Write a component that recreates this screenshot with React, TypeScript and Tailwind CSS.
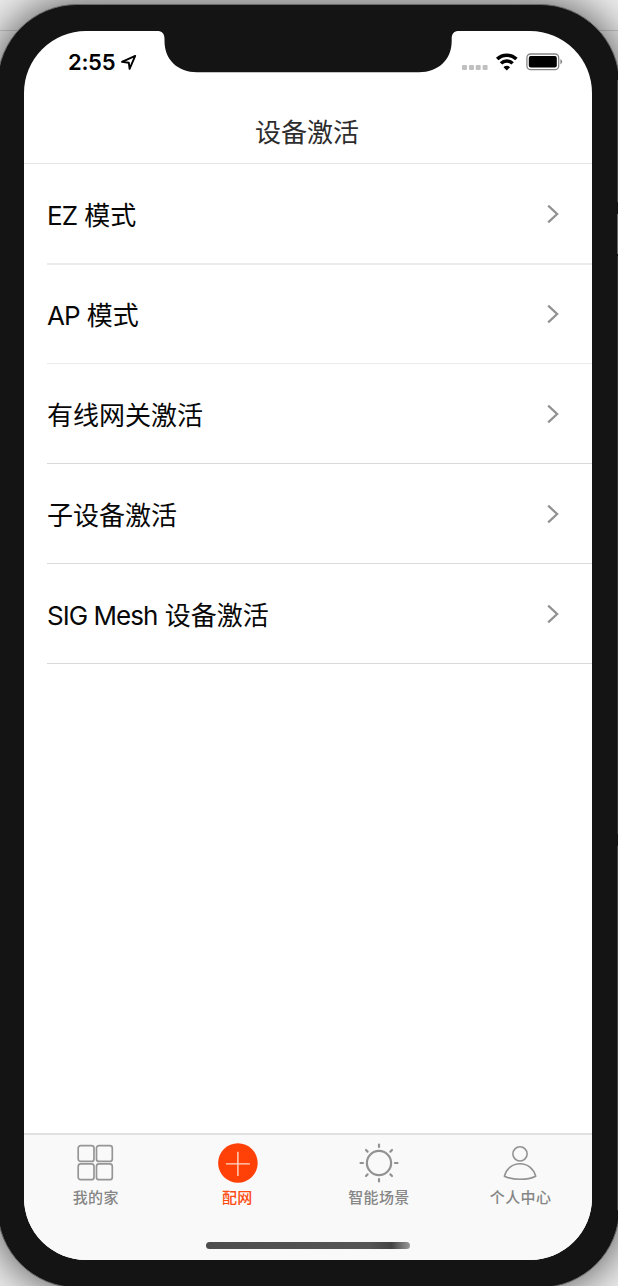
import type { ReactNode } from "react";

const modes = [
  { latin: "EZ ", label: "模式", line: "border-b-2 border-[#ececec]" },
  { latin: "AP ", label: "模式", line: "border-b border-[#ebebeb]" },
  { latin: "", label: "有线网关激活", line: "border-b border-[#d9d9d9]" },
  { latin: "", label: "子设备激活", line: "border-b border-[#d9d9d9]" },
  { latin: "SIG Mesh ", label: "设备激活", line: "border-b border-[#d9d9d9]" },
];

function StatusIcons() {
  return (
    <svg width="102" height="22" viewBox="0 0 102 22" className="block">
      <g fill="#c0c0c0">
        <rect x="0" y="14" width="5" height="5" rx="1" />
        <rect x="7" y="14" width="5" height="5" rx="1" />
        <rect x="13.7" y="14" width="5" height="5" rx="1" />
        <rect x="20.6" y="14" width="5" height="5" rx="1" />
      </g>
      <g fill="none" stroke="#000" strokeWidth="3.5">
        <path d="M35.2 8.1 A13.6 13.6 0 0 1 54.4 8.1" />
        <path d="M39 12.4 A8.1 8.1 0 0 1 50.6 12.4" />
      </g>
      <path d="M44.8 19.4 L41.5 16.2 A4.7 4.7 0 0 1 48.1 16.2 Z" fill="#000" />
      <rect x="64.9" y="3" width="31.8" height="15.6" rx="3.7" fill="#fff" stroke="#858585" strokeWidth="1.3" />
      <rect x="66.8" y="5" width="28" height="11.6" rx="2" fill="#000" />
      <path d="M98.4 8 Q102 10.7 98.4 13.4 Z" fill="#858585" />
    </svg>
  );
}

function HomeIcon() {
  return (
    <svg width="40" height="40" viewBox="0 0 40 40" fill="none" stroke="#969696" strokeWidth="1.7">
      <rect x="2.2" y="2.6" width="15.8" height="15.8" rx="2.5" />
      <rect x="20.5" y="2.6" width="15.8" height="15.8" rx="2.5" />
      <rect x="2.2" y="20.9" width="15.8" height="15.8" rx="2.5" />
      <rect x="20.5" y="20.9" width="15.8" height="15.8" rx="2.5" />
    </svg>
  );
}

function AddIcon() {
  return (
    <svg width="41" height="40" viewBox="0 0 41 40">
      <circle cx="20.9" cy="20" r="19.8" fill="#ff4108" />
      <path d="M20.9 8.8V33M8.9 20.9H32.9" stroke="#ffd9c8" strokeWidth="1.4" />
    </svg>
  );
}

function SunIcon() {
  return (
    <svg width="40" height="40" viewBox="0 0 40 40" fill="none" stroke="#929292" strokeWidth="2.2" strokeLinecap="round">
      <circle cx="20" cy="20" r="12.1" />
      <path d="M20 1.5V4M20 36V38.5M1.5 20H4M36 20H38.5M7 7L8.6 8.6M31.4 31.4L33 33M7 33L8.6 31.4M31.4 8.6L33 7" />
    </svg>
  );
}

function PersonIcon() {
  return (
    <svg width="40" height="40" viewBox="0 0 40 40" fill="none" stroke="#929292" strokeWidth="1.6">
      <circle cx="20" cy="10.9" r="7.1" />
      <path d="M4.4 33.2C6.4 25.5 12.4 20.7 20 20.7S33.6 25.5 35.7 33.2Q29.5 36.3 20 36.3T4.4 33.2Z" strokeLinejoin="round" />
    </svg>
  );
}

function Tab({ icon, label, active = false }: { icon: ReactNode; label: string; active?: boolean }) {
  return (
    <div className={`flex w-[141.6px] flex-col items-center ${active ? "text-[#ff4b12]" : "text-[#868686]"}`}>
      {icon}
      <span className="mt-[4px] pl-[0.4px] text-[15px] leading-[22px] font-medium tracking-[0.4px]">{label}</span>
    </div>
  );
}

export default function App() {
  return (
    <div className="relative h-[1286px] w-[618px] overflow-hidden bg-[#ededed] font-['Inter','Noto_Sans_CJK_SC',sans-serif]">
      <div className="h-[31px] border-b border-[#cccccc]" />
      <div className="absolute top-[4px] left-[-3px] h-[1284px] w-[623px] rounded-[80px] border border-[#696969] bg-[#141414] pt-[26px] pl-[26px] shadow-[0_0_40px_4px_rgba(0,0,0,0.6)]">
        <div className="relative flex h-[1229px] w-[568px] flex-col overflow-hidden rounded-[62px] bg-white">
          <div className="flex h-[72px] items-start justify-between pr-[28px] pl-[44px]">
            <div className="flex items-center pt-[18px]">
              <span className="text-[22px] leading-[26px] font-semibold tracking-[-0.3px] text-black">2:55</span>
              <svg width="17" height="17" viewBox="0 0 17 17" className="ml-[5px]" fill="none" stroke="#000" strokeWidth="1.9" strokeLinejoin="round">
                <path d="M15.2 1.9L2 7.8L8.8 8.7L9.6 14.9Z" />
              </svg>
            </div>
            <div className="pt-[20px]">
              <StatusIcons />
            </div>
          </div>
          <svg width="308" height="42" viewBox="0 0 308 42" className="absolute top-0 left-[130px] fill-[#141414]">
            <path d="M3 0C8 0 10.5 2.5 10.5 8V10C10.5 29 24 41.2 43 41.2H265C284 41.2 297.7 29 297.7 10V8C297.7 2.5 300 0 305 0Z" />
          </svg>
          <div className="flex h-[61px] items-start justify-center border-b border-[#e5e5e5] pr-[2px]">
            <h1 className="pt-[10px] text-[26px] leading-[40px] text-[#2d2d2d]">设备激活</h1>
          </div>
          <ul className="flex flex-col pl-[23px]">
            {modes.map((mode, i) => (
              <li
                key={i}
                className={`flex items-center justify-between pr-[32px] ${mode.line} ${i === 0 ? "h-[101px]" : i === 1 ? "h-[99px]" : "h-[100px]"}`}
              >
                <span className="pt-[4px] text-[26px] leading-[40px] whitespace-pre text-[#080808]">
                  {mode.latin && <span className="mr-[0.8px] tracking-[-0.95px]">{mode.latin}</span>}
                  {mode.label}
                </span>
                <svg width="14" height="20" viewBox="0 0 14 20" fill="none" stroke="#929292" strokeWidth="2.3">
                  <path d="M2.2 1.7L11.1 10L2.2 18.3" />
                </svg>
              </li>
            ))}
          </ul>
          <nav className="mt-auto flex h-[127px] border-t-2 border-[#e0e0e0] bg-[#f9f9f9] pt-[8px] pl-[0.8px]">
            <Tab icon={<HomeIcon />} label="我的家" />
            <Tab icon={<AddIcon />} label="配网" active />
            <Tab icon={<SunIcon />} label="智能场景" />
            <Tab icon={<PersonIcon />} label="个人中心" />
          </nav>
          <div className="absolute bottom-[11px] left-[182px] h-[7px] w-[204px] rounded-full bg-[linear-gradient(90deg,#4d4d4d_0%,#555_80%,#444_91%,#999_100%)]" />
        </div>
      </div>
      <div className="absolute top-[80px] right-0 flex h-[1130px] w-px flex-col">
        <div className="h-[122px] bg-[#444]" />
        <div className="mt-[12px] h-[40px] bg-[#666]" />
        <div className="mt-[2px] h-[578px] bg-[#333]" />
        <div className="mt-[12px] flex-1 bg-[#444]" />
      </div>
    </div>
  );
}
